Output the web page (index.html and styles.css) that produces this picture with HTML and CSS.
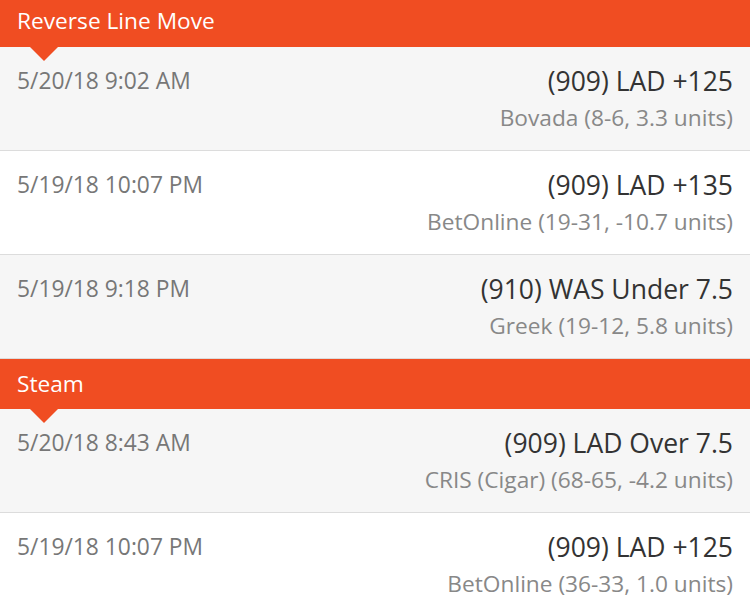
FILE: index.html
```html
<!DOCTYPE html>
<html>
<head>
<meta charset="utf-8">
<link rel="stylesheet" href="styles.css">
</head>
<body>
<div class="list">
  <div class="section-header first"><span>Reverse Line Move</span></div>
  <div class="row alt">
    <div class="date">5/20/18 9:02 AM</div>
    <div class="info"><div class="pick">(909) LAD +125</div><div class="book">Bovada (8-6, 3.3 units)</div></div>
  </div>
  <div class="row">
    <div class="date">5/19/18 10:07 PM</div>
    <div class="info"><div class="pick">(909) LAD +135</div><div class="book">BetOnline (19-31, -10.7 units)</div></div>
  </div>
  <div class="row alt">
    <div class="date">5/19/18 9:18 PM</div>
    <div class="info"><div class="pick">(910) WAS Under 7.5</div><div class="book">Greek (19-12, 5.8 units)</div></div>
  </div>
  <div class="section-header"><span>Steam</span></div>
  <div class="row alt">
    <div class="date">5/20/18 8:43 AM</div>
    <div class="info"><div class="pick">(909) LAD Over 7.5</div><div class="book">CRIS (Cigar) (68-65, -4.2 units)</div></div>
  </div>
  <div class="row">
    <div class="date">5/19/18 10:07 PM</div>
    <div class="info"><div class="pick">(909) LAD +125</div><div class="book">BetOnline (36-33, 1.0 units)</div></div>
  </div>
</div>
</body>
</html>
```
FILE: styles.css
```css
html, body {
  margin: 0;
  padding: 0;
  background: #ffffff;
  overflow: hidden;
}
body {
  font-family: "Open Sans", Lato, sans-serif;
  width: 750px;
  height: 615px;
}
.list {
  display: flex;
  flex-direction: column;
}
.section-header {
  position: relative;
  background: #f04d22;
  color: #ffffff;
  height: 50px;
  display: flex;
  align-items: center;
  padding: 0 17px 2px 17px;
  font-size: 22.7px;
  box-sizing: border-box;
}
.section-header.first {
  height: 47px;
  padding-bottom: 6px;
}
.section-header::after {
  content: "";
  position: absolute;
  left: 30px;
  top: 100%;
  border-left: 14px solid transparent;
  border-right: 14px solid transparent;
  border-top: 14px solid #f04d22;
  z-index: 2;
}
.row {
  display: flex;
  justify-content: space-between;
  align-items: flex-start;
  height: 104px;
  box-sizing: border-box;
  padding: 18px 17px 0 17px;
  background: #ffffff;
  border-bottom: 1px solid #dcdcdc;
}
.row.alt {
  background: #f6f6f6;
}
.date {
  font-size: 22.8px;
  color: #777777;
  line-height: 32px;
}
.info {
  text-align: right;
}
.pick {
  font-size: 26.5px;
  color: #333333;
  line-height: 32px;
}
.book {
  font-size: 22.7px;
  color: #888888;
  line-height: 32px;
  margin-top: 5px;
}
```
